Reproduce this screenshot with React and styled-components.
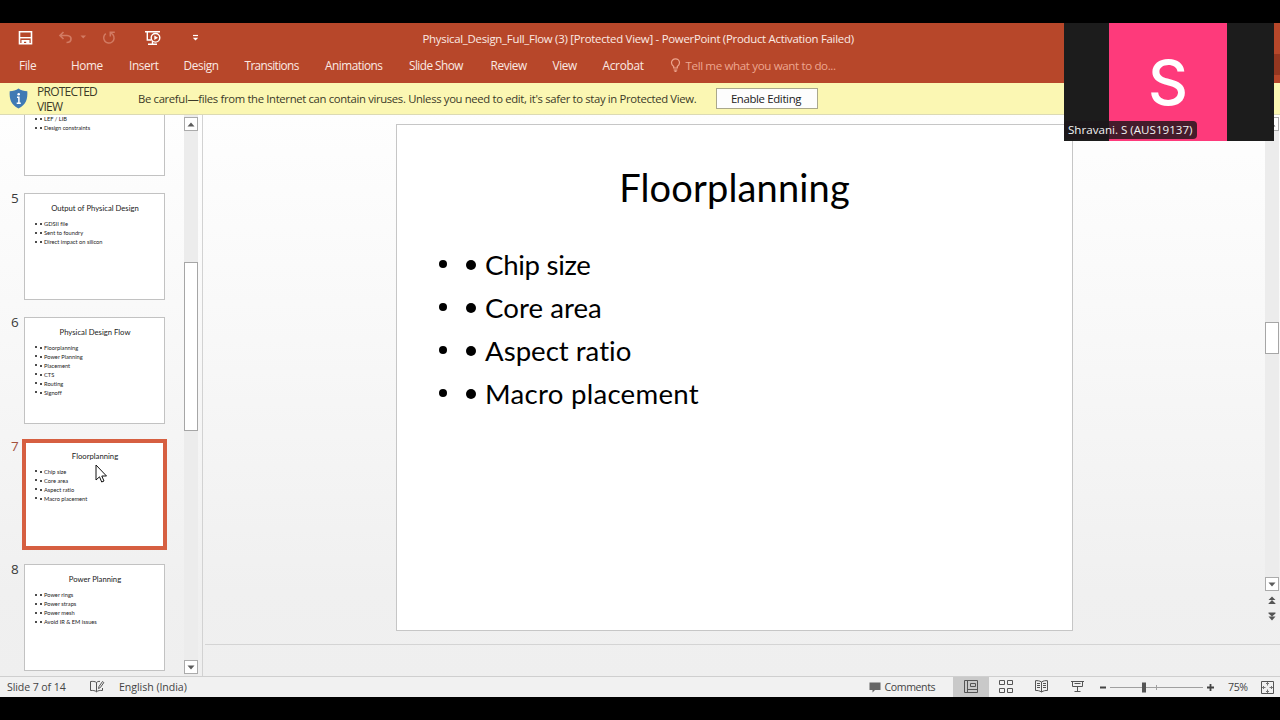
import React from "react";
import styled, { createGlobalStyle, css } from "styled-components";

const GlobalStyle = createGlobalStyle`
  * {
    box-sizing: border-box;
  }
  body {
    margin: 0;
    background: #000;
    overflow: hidden;
  }
`

const Screen = styled.div`
  position: relative;
  width: 1280px;
  height: 720px;
  padding: 23px 0;
  display: flex;
  flex-direction: column;
  background: #000;
  font-family: "Open Sans", "Noto Sans", sans-serif;
  font-size: 11.3px;
  font-variant-ligatures: none;
  color: #333;
  white-space: nowrap;
  overflow: hidden;
`

const Header = styled.header`
  height: 60px;
  flex: none;
  background: #b7472a;
  color: #fbeae4;
`

const TitleBar = styled.div`
  height: 30px;
  display: flex;
  align-items: center;
`

const QuickAccess = styled.div`
  width: 422.5px;
  height: 28px;
  padding-left: 17px;
  display: flex;
  align-items: center;
  svg {
    display: block;
  }
`

const Title = styled.span`
  font-size: 11.4px;
  letter-spacing: ${p => p.$spacing}px;
`

const Tabs = styled.nav`
  height: 30px;
  padding: 0 0 6px 19px;
  display: flex;
  align-items: center;
  font-size: 11.8px;
`

const Tab = styled.span`
  width: ${p => p.$width}px;
  letter-spacing: ${p => p.$spacing || -0.38}px;
`

const TellMe = styled.span`
  display: flex;
  align-items: center;
  gap: 5px;
  color: #eda68f;
  font-size: 11.6px;
  letter-spacing: -0.38px;
`

const Banner = styled.div`
  height: 32px;
  flex: none;
  display: flex;
  align-items: center;
  background: #fbf7b3;
  border-bottom: 1px solid #dcdab4;
  padding-left: 9px;
  color: #3c3a28;
`

const BannerName = styled.div`
  width: 101px;
  margin-left: 9px;
  font-size: 12px;
  line-height: 15px;
  letter-spacing: -0.75px;
  white-space: normal;
  padding-right: 30px;
`

const BannerText = styled.span`
  width: 578px;
  letter-spacing: -0.34px;
`

const EnableButton = styled.button`
  width: 102px;
  height: 21px;
  padding: 0 2px 0 0;
  border: 1px solid #aaa88c;
  background: #fdfdfd;
  font: inherit;
  font-size: 11.4px;
  letter-spacing: -0.35px;
  color: #222;
`

const Workspace = styled.main`
  height: 561px;
  flex: none;
  display: flex;
  background: linear-gradient(#fefefe, #f8f8f8 40%, #f0f0f0 85%, #efefef);
  overflow: hidden;
`

const ThumbPane = styled.aside`
  width: 203px;
  display: flex;
  border-right: 1px solid #d2d2d2;
`

const ThumbList = styled.div`
  width: 184px;
  display: flex;
  flex-direction: column;
  gap: 16.8px;
  padding-left: 11px;
`

const ThumbRow = styled.div`
  display: flex;
  flex: none;
`

const ThumbNumber = styled.span`
  width: 13px;
  font-size: 13.5px;
  line-height: 11px;
  letter-spacing: -0.3px;
  color: ${p => (p.$active ? "#a4503c" : "#3a3a3a")};
`

const Thumb = styled.div`
  width: 141px;
  height: 107px;
  padding: 9px 9px 0 10px;
  background: #fff;
  border: 1px solid #c2c2c2;
  font-family: Lato, sans-serif;
  color: #222;
  ${p => p.$active && css`
    border-color: #fff;
    outline: 4px solid #d65f41;
    outline-offset: -2px;
  `}
  ${p => p.$cut && css`
    height: 61.3px;
    padding-top: 0;
    border-top: 0;
    div:first-child {
      margin-top: -1px;
    }
  `}
`

const ThumbTitle = styled.div`
  text-align: center;
  font-size: 7.7px;
  line-height: 10px;
  margin-bottom: 6px;
`

const ThumbLine = styled.div`
  display: flex;
  align-items: center;
  height: 9px;
  font-size: 5.7px;
  &::before,
  span::before {
    content: "";
    display: inline-block;
    width: 2px;
    height: 2px;
    border-radius: 1px;
    background: #111;
  }
  &::before {
    margin-right: 3px;
  }
  span::before {
    margin-right: 2px;
    vertical-align: 1px;
  }
`

const ScrollBar = styled.div`
  width: 14px;
  flex: none;
  display: flex;
  flex-direction: column;
  background: #ececec;
`

const ScrollButton = styled.div`
  height: 14px;
  flex: none;
  display: flex;
  align-items: center;
  justify-content: center;
  background: #fff;
  border: 1px solid #ababab;
`

const Track = styled.div`
  height: ${p => p.$height}px;
`

const ScrollThumb = styled.div`
  height: ${p => p.$height}px;
  background: #fff;
  border: 1px solid #a6a6a6;
`

const Editor = styled.section`
  flex: 1;
  display: flex;
  flex-direction: column;
  padding-left: 2px;
`

const Stage = styled.div`
  height: 530px;
  display: flex;
  justify-content: space-between;
  border-bottom: 1px solid #d4d4d4;
`

const Slide = styled.article`
  width: 677px;
  height: 507px;
  margin: 9px 0 0 191px;
  padding: 36px 40px 0 42px;
  background: #fff;
  border: 1px solid #c6c6c6;
  font-family: Lato, sans-serif;
  color: #000;
`

const SlideTitle = styled.h1`
  margin: 0 0 30px -2px;
  font-size: 38px;
  line-height: 52px;
  font-weight: 400;
  text-align: center;
  letter-spacing: 0.15px;
`

const Bullets = styled.ul`
  margin: 0;
  padding: 0;
  list-style: none;
`

const Bullet = styled.li`
  height: 43px;
  display: flex;
  align-items: center;
  font-size: 27.6px;
  letter-spacing: ${p => p.$spacing || 0}px;
`

const Dot = styled.i`
  width: ${p => p.$size}px;
  height: ${p => p.$size}px;
  margin-right: ${p => p.$gap}px;
  margin-top: -${p => p.$lift || 0}px;
  border-radius: 50%;
  background: #000;
`

const StageScroll = styled.div`
  width: 15px;
  padding: 2px 0 0;
  display: flex;
  flex-direction: column;
  ${ScrollBar} {
    margin-bottom: 5px;
  }
`

const SlideJump = styled.div`
  height: 16px;
  width: 14px;
  display: flex;
  justify-content: center;
`

const StatusBar = styled.footer`
  height: 21px;
  flex: none;
  display: flex;
  align-items: center;
  background: #f1f1f1;
  border-top: 1px solid #cfcfcf;
  padding-left: 7px;
  font-size: 10.6px;
  color: #444;
`

const StatusText = styled.span`
  width: ${p => p.$width}px;
  padding-left: ${p => p.$indent || 0}px;
  letter-spacing: ${p => p.$spacing || 0}px;
`

const ViewButton = styled.div`
  width: 35.5px;
  height: 20px;
  display: flex;
  align-items: center;
  justify-content: center;
  background: ${p => (p.$active ? "#c9c9c9" : "transparent")};
  svg {
    margin-top: -1px;
  }
`

const Zoom = styled.div`
  width: 133px;
  display: flex;
  align-items: center;
  svg {
    margin-top: -1px;
  }
`

const Participant = styled.div`
  position: absolute;
  top: 23px;
  left: 1064px;
  width: 210px;
  height: 118px;
  background: #1c1c1c;
  display: flex;
  justify-content: center;
`

const Avatar = styled.div`
  width: 118px;
  height: 118px;
  margin-right: 2px;
  display: flex;
  align-items: center;
  justify-content: center;
  background: #fe3a7b;
  color: #fff;
  font-family: Inter, sans-serif;
  font-size: 62px;
  font-weight: 500;
`

const ParticipantName = styled.span`
  position: absolute;
  left: 0;
  bottom: 2px;
  width: 133px;
  height: 18px;
  padding-left: 4px;
  line-height: 18px;
  border-radius: 4px;
  background: rgba(28, 22, 26, 0.82);
  color: #f2f2f2;
  font-size: 11.6px;
`

const RibbonEdge = styled.div`
  position: absolute;
  top: 54px;
  right: 0;
  width: 6px;
  height: 21px;
  background: #943720;
`

const Pointer = styled.svg`
  position: absolute;
  left: 95px;
  top: 464px;
`

const tabs = [
  { name: "File", width: 52 },
  { name: "Home", width: 58 },
  { name: "Insert", width: 54.5 },
  { name: "Design", width: 61 },
  { name: "Transitions", width: 80.5, spacing: -0.6 },
  { name: "Animations", width: 84, spacing: -0.48 },
  { name: "Slide Show", width: 81.5, spacing: -0.55 },
  { name: "Review", width: 62 },
  { name: "View", width: 50 },
  { name: "Acrobat", width: 67, spacing: -0.25 },
]

const slides = [
  { no: 4, cut: true, lines: ["LEF / LIB", "Design constraints"] },
  { no: 5, title: "Output of Physical Design", lines: ["GDSII file", "Sent to foundry", "Direct impact on silicon"] },
  { no: 6, title: "Physical Design Flow", lines: ["Floorplanning", "Power Planning", "Placement", "CTS", "Routing", "Signoff"] },
  { no: 7, title: "Floorplanning", lines: ["Chip size", "Core area", "Aspect ratio", "Macro placement"] },
  { no: 8, title: "Power Planning", lines: ["Power rings", "Power straps", "Power mesh", "Avoid IR & EM issues"] },
]

const spacings = [-0.3, 0.05, 0, 0.27]

const Triangle = ({ up }) => (
  <svg width="8" height="5" viewBox="0 0 8 5">
    <path d={ up ? "M0.5 4.5L4 0.5L7.5 4.5Z" : "M0.5 0.5L4 4.5L7.5 0.5Z" } fill="#5c5c5c" />
  </svg>
)

const QuickIcons = () => (
  <svg width="190" height="22" viewBox="17 26.500 190 22" fill="none" stroke="#fff" strokeWidth="1.4">
    <path d="M19.500 31.200H31.500V43.300H19.500Z" strokeWidth="1.600" />
    <path d="M19.500 37.200H31.500" />
    <path d="M21.500 39.500H29.500V43.500H26.200V41.300H24V43.500H21.500Z" fill="#fff" stroke="none" />
    <g stroke="#d27b63">
      <path d="M63.5 31.500L60 35L63.500 38.500M60.500 35H67Q71 35.300 71 38.300Q71 42 66.500 42" strokeWidth="1.700" />
      <path d="M80.500 35H86L83.250 38Z" fill="#d27b63" stroke="none" />
      <path d="M105.800 33.200A5.200 5.200 0 1 0 113 34.200L110.500 32M114.800 31.800H110.300V36" strokeWidth="1.500" />
    </g>
    <path d="M145 31.200H160M147.300 31V39.500H151M152.500 39.500V43.500M148 43.800H157" />
    <circle cx="155.500" cy="37.300" r="4.300" fill="#b7472a" />
    <path d="M154.300 35L158 37.300L154.300 39.600Z" fill="#fff" stroke="none" />
    <path d="M193 35H198" strokeWidth="1.200" />
    <path d="M192.800 37.200H198.200L195.500 40Z" fill="#fff" stroke="none" />
  </svg>
)

const Bulb = () => (
  <svg width="11" height="14" viewBox="0 0 11 14" fill="none" stroke="#eda68f" strokeWidth="1.2">
    <path d="M3.700 10V8.500C2.400 7.500 1.500 6.500 1.500 4.800A4 4 0 0 1 9.500 4.800C9.500 6.500 8.600 7.500 7.300 8.500V10ZM3.700 12H7.300M4.500 13.300H6.500" />
  </svg>
)

const Shield = () => (
  <svg width="19" height="21" viewBox="0 0 19 21">
    <path d="M9.500 0.500C12 2.500 15 3.200 18.300 3.300C18.800 11 17 17 9.500 20.500C2 17 0.200 11 0.700 3.300C4 3.200 7 2.500 9.500 0.500Z" fill="#3f7ab4" />
    <circle cx="9.700" cy="6.300" r="1.300" fill="#fff" />
    <path d="M8 9.200H9.900V15M7.700 15.200H11.800" stroke="#fff" strokeWidth="1.500" fill="none" />
  </svg>
)

const ProofingSvg = styled.svg`
  display: block;
  margin-top: -1px;
`

const Proofing = () => (
  <ProofingSvg width="15" height="13" viewBox="0 0 15 13" fill="none" stroke="#555" strokeWidth="1">
    <path d="M6.500 2.500C5 1.300 3 1.300 0.500 1.500V10.500C3 10.300 5 10.500 6.500 11.800ZM6.500 2.500C7.500 1.500 8.500 1.300 10 1.400M6.500 11.800C8 10.500 10 10.300 12.500 10.500V8" />
    <path d="M8.500 8.500L9 6.500L12.500 1.500L13.800 2.600L10.300 7.600Z" />
  </ProofingSvg>
)

const NormalIcon = () => (
  <svg width="14" height="13" viewBox="0 0 14 13" fill="none" stroke="#555">
    <path d="M0.500 0.500H13.500V12.500H0.500ZM3.500 0.500V12.500M3.500 9.500H13.500M6.500 3.500H11.500V6.500H6.500Z" />
  </svg>
)

const SorterIcon = () => (
  <svg width="14" height="13" viewBox="0 0 14 13" fill="none" stroke="#555">
    <path d="M0.500 0.500H5.500V4.500H0.500ZM8.500 0.500H13.500V4.500H8.500ZM0.500 8.500H5.500V12.500H0.500ZM8.500 8.500H13.500V12.500H8.500Z" />
  </svg>
)

const ReadingIcon = () => (
  <svg width="13" height="13" viewBox="0 0 13 13" fill="none" stroke="#555">
    <path d="M6.500 2C4.500 0.700 2.500 0.500 0.500 0.700V10.500C2.500 10.300 4.500 10.700 6.500 12ZM6.500 2C8.500 0.700 10.500 0.500 12.500 0.700V10.500C10.500 10.300 8.500 10.700 6.500 12" />
    <path d="M2 3.500H5M2 5.500H5M2 7.500H5M8 3.500H11M8 5.500H11M8 7.500H11" />
  </svg>
)

const ShowIcon = () => (
  <svg width="13" height="13" viewBox="0 0 13 13" fill="none" stroke="#555">
    <path d="M0 1.500H13M1.500 1.500V6.500H11.500V1.500M3.500 3.500H9.500M6.500 6.500V11M3.500 11.500H9.500" />
  </svg>
)

const FitIcon = () => (
  <svg width="13" height="13" viewBox="0 0 13 13" fill="none" stroke="#555">
    <path d="M0.500 0.500H12.500V12.500H0.500Z" />
    <path d="M6.500 1.500V4.500M5 3L6.500 1.500L8 3M6.500 11.500V8.500M5 10L6.500 11.500L8 10M1.500 6.500H4.500M3 5L1.500 6.500L3 8M11.500 6.500H8.500M10 5L11.500 6.500L10 8" strokeWidth="0.800" />
  </svg>
)

const DoubleArrow = ({ down }) => (
  <svg width="8" height="9" viewBox="0 0 8 9" fill="#555">
    { down
      ? <path d="M0.500 0.500H7.500V1.500L4 4.500L0.500 1.500ZM0.500 4.500H7.500L4 8.500Z" />
      : <path d="M0.500 4L4 0.500L7.500 4ZM0.500 7.500L4 4L7.500 7.500V8H0.500Z" /> }
  </svg>
)

const App = () => {
  return (
    <Screen>
      <GlobalStyle />
      <Header>
        <TitleBar>
          <QuickAccess><QuickIcons /></QuickAccess>
          <Title $spacing={ -0.27 }>Physical_Design_Full_Flow (3) [Protected View] - PowerPoint (Product Activation Failed)</Title>
        </TitleBar>
        <Tabs>
          { tabs.map(tab => <Tab key={ tab.name } $width={ tab.width } $spacing={ tab.spacing }>{ tab.name }</Tab>) }
          <TellMe><Bulb />Tell me what you want to do...</TellMe>
        </Tabs>
      </Header>

      <Banner>
        <Shield />
        <BannerName>PROTECTED VIEW</BannerName>
        <BannerText>Be careful—files from the Internet can contain viruses. Unless you need to edit, it's safer to stay in Protected View.</BannerText>
        <EnableButton>Enable Editing</EnableButton>
      </Banner>

      <Workspace>
        <ThumbPane>
          <ThumbList>
            { slides.map(({ no, title, lines, cut }) => (
              <ThumbRow key={ no }>
                <ThumbNumber $active={ no === 7 }>{ !cut && no }</ThumbNumber>
                <Thumb $active={ no === 7 } $cut={ cut }>
                  { title && <ThumbTitle>{ title }</ThumbTitle> }
                  { lines.map(line => <ThumbLine key={ line }><span>{ line }</span></ThumbLine>) }
                </Thumb>
              </ThumbRow>
            )) }
          </ThumbList>
          <ScrollBar>
            <Track $height={ 2 } />
            <ScrollButton><Triangle up /></ScrollButton>
            <Track $height={ 131 } />
            <ScrollThumb $height={ 169 } />
            <Track $height={ 229 } />
            <ScrollButton><Triangle /></ScrollButton>
          </ScrollBar>
        </ThumbPane>

        <Editor>
          <Stage>
            <Slide>
              <SlideTitle>Floorplanning</SlideTitle>
              <Bullets>
                { slides[3].lines.map((line, i) => (
                  <Bullet key={ line } $spacing={ spacings[i] }>
                    <Dot $size={ 8 } $gap={ 19 } $lift={ 1 } />
                    <Dot $size={ 10 } $gap={ 9 } />
                    { line }
                  </Bullet>
                )) }
              </Bullets>
            </Slide>
            <StageScroll>
              <ScrollBar>
                <ScrollButton><Triangle up /></ScrollButton>
                <Track $height={ 191 } />
                <ScrollThumb $height={ 32 } />
                <Track $height={ 223 } />
                <ScrollButton><Triangle /></ScrollButton>
              </ScrollBar>
              <SlideJump><DoubleArrow /></SlideJump>
              <SlideJump><DoubleArrow down /></SlideJump>
            </StageScroll>
          </Stage>
        </Editor>
      </Workspace>

      <StatusBar>
        <StatusText $width={ 83 } $spacing={ -0.1 }>Slide 7 of 14</StatusText>
        <StatusText $width={ 29 }><Proofing /></StatusText>
        <StatusText $width={ 750 } $spacing={ -0.05 }>English (India)</StatusText>
        <svg width="12" height="11" viewBox="0 0 12 11"><path d="M0.500 0.500H11.500V8H6L3.500 10.500V8H0.500Z" fill="#666" /></svg>
        <StatusText $width={ 72 } $indent={ 3.5 } $spacing={ -0.4 }>Comments</StatusText>
        <ViewButton $active><NormalIcon /></ViewButton>
        <ViewButton><SorterIcon /></ViewButton>
        <ViewButton><ReadingIcon /></ViewButton>
        <ViewButton><ShowIcon /></ViewButton>
        <Zoom>
          <svg width="120" height="14" viewBox="0 0 120 14" fill="none" stroke="#a0a0a0">
            <path d="M15 7.500H108M61.500 5V10" />
            <path d="M5 7.500H11M112 7.500H119M115.500 4V11" stroke="#444" strokeWidth="1.800" />
            <path d="M49 2.500V12.500" stroke="#555" strokeWidth="4" />
          </svg>
        </Zoom>
        <StatusText $width={ 33 } $spacing={ -0.4 }>75%</StatusText>
        <FitIcon />
      </StatusBar>

      <RibbonEdge />
      <Participant>
        <Avatar>S</Avatar>
        <ParticipantName>Shravani. S (AUS19137)</ParticipantName>
      </Participant>
      <Pointer width="13" height="20" viewBox="0 0 13 20">
        <path d="M1 1V16L4.500 12.800L6.700 18L9 17L6.800 12H11.500Z" fill="#fff" stroke="#111" />
      </Pointer>
    </Screen>
  );
};

export default App;
